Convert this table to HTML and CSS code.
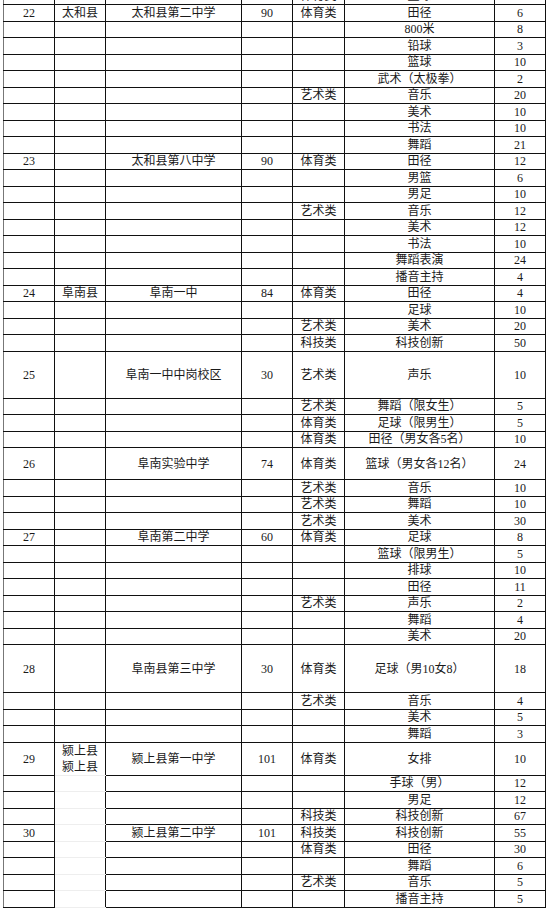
FILE: index.html
```html
<!DOCTYPE html>
<html lang="zh">
<head>
<meta charset="utf-8">
<title>招生计划表</title>
<link rel="stylesheet" href="styles.css">
</head>
<body>
<div class="wrap">
<table class="t">
<colgroup>
<col class="c1"><col class="c2"><col class="c3"><col class="c4"><col class="c5"><col class="c6"><col class="c7">
</colgroup>
<tbody>
<tr><td></td><td></td><td></td><td></td><td>体育类</td><td>篮球</td><td>10</td></tr>
<tr><td>22</td><td>太和县</td><td>太和县第二中学</td><td>90</td><td>体育类</td><td>田径</td><td>6</td></tr>
<tr><td></td><td></td><td></td><td></td><td></td><td>800米</td><td>8</td></tr>
<tr><td></td><td></td><td></td><td></td><td></td><td>铅球</td><td>3</td></tr>
<tr><td></td><td></td><td></td><td></td><td></td><td>篮球</td><td>10</td></tr>
<tr><td></td><td></td><td></td><td></td><td></td><td>武术（太极拳）</td><td>2</td></tr>
<tr><td></td><td></td><td></td><td></td><td>艺术类</td><td>音乐</td><td>20</td></tr>
<tr><td></td><td></td><td></td><td></td><td></td><td>美术</td><td>10</td></tr>
<tr><td></td><td></td><td></td><td></td><td></td><td>书法</td><td>10</td></tr>
<tr><td></td><td></td><td></td><td></td><td></td><td>舞蹈</td><td>21</td></tr>
<tr><td>23</td><td></td><td>太和县第八中学</td><td>90</td><td>体育类</td><td>田径</td><td>12</td></tr>
<tr><td></td><td></td><td></td><td></td><td></td><td>男篮</td><td>6</td></tr>
<tr><td></td><td></td><td></td><td></td><td></td><td>男足</td><td>10</td></tr>
<tr><td></td><td></td><td></td><td></td><td>艺术类</td><td>音乐</td><td>12</td></tr>
<tr><td></td><td></td><td></td><td></td><td></td><td>美术</td><td>12</td></tr>
<tr><td></td><td></td><td></td><td></td><td></td><td>书法</td><td>10</td></tr>
<tr><td></td><td></td><td></td><td></td><td></td><td>舞蹈表演</td><td>24</td></tr>
<tr><td></td><td></td><td></td><td></td><td></td><td>播音主持</td><td>4</td></tr>
<tr><td>24</td><td>阜南县</td><td>阜南一中</td><td>84</td><td>体育类</td><td>田径</td><td>4</td></tr>
<tr><td></td><td></td><td></td><td></td><td></td><td>足球</td><td>10</td></tr>
<tr><td></td><td></td><td></td><td></td><td>艺术类</td><td>美术</td><td>20</td></tr>
<tr><td></td><td></td><td></td><td></td><td>科技类</td><td>科技创新</td><td>50</td></tr>
<tr class="h47"><td>25</td><td></td><td>阜南一中中岗校区</td><td>30</td><td>艺术类</td><td>声乐</td><td>10</td></tr>
<tr><td></td><td></td><td></td><td></td><td>艺术类</td><td>舞蹈（限女生）</td><td>5</td></tr>
<tr><td></td><td></td><td></td><td></td><td>体育类</td><td>足球（限男生）</td><td>5</td></tr>
<tr><td></td><td></td><td></td><td></td><td>体育类</td><td>田径（男女各5名）</td><td>10</td></tr>
<tr class="h32"><td>26</td><td></td><td>阜南实验中学</td><td>74</td><td>体育类</td><td>篮球（男女各12名）</td><td>24</td></tr>
<tr><td></td><td></td><td></td><td></td><td>艺术类</td><td>音乐</td><td>10</td></tr>
<tr><td></td><td></td><td></td><td></td><td>艺术类</td><td>舞蹈</td><td>10</td></tr>
<tr><td></td><td></td><td></td><td></td><td>艺术类</td><td>美术</td><td>30</td></tr>
<tr><td>27</td><td></td><td>阜南第二中学</td><td>60</td><td>体育类</td><td>足球</td><td>8</td></tr>
<tr><td></td><td></td><td></td><td></td><td></td><td>篮球（限男生）</td><td>5</td></tr>
<tr><td></td><td></td><td></td><td></td><td></td><td>排球</td><td>10</td></tr>
<tr><td></td><td></td><td></td><td></td><td></td><td>田径</td><td>11</td></tr>
<tr><td></td><td></td><td></td><td></td><td>艺术类</td><td>声乐</td><td>2</td></tr>
<tr><td></td><td></td><td></td><td></td><td></td><td>舞蹈</td><td>4</td></tr>
<tr><td></td><td></td><td></td><td></td><td></td><td>美术</td><td>20</td></tr>
<tr class="h48"><td>28</td><td></td><td>阜南县第三中学</td><td>30</td><td>体育类</td><td>足球（男10女8）</td><td>18</td></tr>
<tr><td></td><td></td><td></td><td></td><td>艺术类</td><td>音乐</td><td>4</td></tr>
<tr><td></td><td></td><td></td><td></td><td></td><td>美术</td><td>5</td></tr>
<tr><td></td><td></td><td></td><td></td><td></td><td>舞蹈</td><td>3</td></tr>
<tr class="h33"><td>29</td><td class="faintb">颍上县<br>颍上县</td><td>颍上县第一中学</td><td>101</td><td>体育类</td><td>女排</td><td>10</td></tr>
<tr><td></td><td class="faint"></td><td></td><td></td><td></td><td>手球（男）</td><td>12</td></tr>
<tr><td></td><td class="faint"></td><td></td><td></td><td></td><td>男足</td><td>12</td></tr>
<tr><td></td><td class="faint"></td><td></td><td></td><td>科技类</td><td>科技创新</td><td>67</td></tr>
<tr><td>30</td><td class="faint"></td><td>颍上县第二中学</td><td>101</td><td>科技类</td><td>科技创新</td><td>55</td></tr>
<tr><td></td><td class="faint"></td><td></td><td></td><td>体育类</td><td>田径</td><td>30</td></tr>
<tr><td></td><td class="faint"></td><td></td><td></td><td></td><td>舞蹈</td><td>6</td></tr>
<tr><td></td><td class="faint"></td><td></td><td></td><td>艺术类</td><td>音乐</td><td>5</td></tr>
<tr><td></td><td class="faint"></td><td></td><td></td><td></td><td>播音主持</td><td>5</td></tr>
</tbody>
</table>
</div>
</body>
</html>
```

FILE: styles.css
```css
html, body {
  margin: 0;
  padding: 0;
  background: #ffffff;
}

.wrap {
  width: 547px;
  height: 908px;
  overflow: hidden;
}

.t {
  margin-top: -12.5px;
  margin-left: 3px;
  border-collapse: collapse;
  table-layout: fixed;
  width: 543px;
  font-family: "Liberation Serif", "Noto Sans CJK SC", serif;
  font-size: 12px;
  color: #1a1a1a;
}

.c1 { width: 51px; }
.c2 { width: 51px; }
.c3 { width: 136px; }
.c4 { width: 51px; }
.c5 { width: 52px; }
.c6 { width: 150px; }
.c7 { width: 51px; }

.t tr {
  height: 16.5px;
}

.t td {
  border: 1px solid #111;
  padding: 0;
  text-align: center;
  vertical-align: middle;
  line-height: 14px;
  white-space: nowrap;
  overflow: hidden;
}

.t td:first-child {
  border-left-color: #777;
}

.t tr.h47 { height: 47px; }
.t tr.h32 { height: 32px; }
.t tr.h48 { height: 48px; }
.t tr.h33 { height: 33px; }

.t td.faintb {
  border-bottom-color: #eeeeee;
  line-height: 16px;
}

.t td.faint {
  border-top-color: #eeeeee;
  border-bottom-color: #eeeeee;
}
```
